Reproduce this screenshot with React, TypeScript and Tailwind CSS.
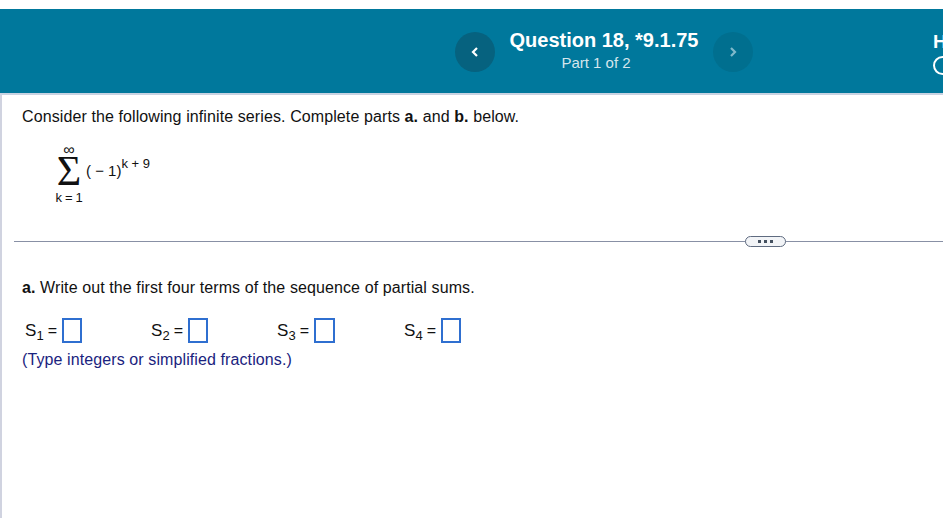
function Term({ n, className, box = "w-[20px]" }: { n: number; className: string; box?: string }) {
  return (
    <span className={`flex items-center ${className}`}>
      <span className="text-[17px] leading-none">S</span>
      <span className="relative top-[5px] text-[13px] leading-none">{n}</span>
      <span className="ml-[4px] mr-[5px] text-[16px] leading-none">=</span>
      <span className={`h-[25px] border-2 border-[#2f6fd0] bg-white ${box}`} />
    </span>
  );
}

export default function App() {
  return (
    <div className="h-[518px] w-[943px] overflow-hidden bg-white pt-[9px] font-['Liberation_Sans',Arial,sans-serif] text-[16px] tracking-[0.1px] text-[#111]">
      {/* question header */}
      <header className="flex h-[84px] bg-[#00789c] tracking-normal text-white">
        <div className="flex w-[455px] flex-none" />
        <div className="flex h-[40px] w-[40px] flex-none translate-y-[23px] items-center justify-center rounded-full bg-[#06627f]">
          <svg width="10" height="12" viewBox="0 0 10 12" fill="none" stroke="#fff" strokeWidth="2.2">
            <path d="M7 2 L3 6 L7 10" />
          </svg>
        </div>
        <div className="flex w-[218px] flex-none flex-col items-center pt-[18px]">
          <div className="whitespace-nowrap text-[20px] font-bold leading-[26px]">Question 18, *9.1.75</div>
          <div className="mr-[16px] text-[15px] leading-[20px] text-[#d5e6ec]">Part 1 of 2</div>
        </div>
        <div className="flex h-[40px] w-[40px] flex-none translate-y-[23px] items-center justify-center rounded-full bg-[#006f8f]">
          <svg width="10" height="12" viewBox="0 0 10 12" fill="none" stroke="#7fb9cb" strokeWidth="2.2">
            <path d="M3 2 L7 6 L3 10" />
          </svg>
        </div>
        <div className="relative flex-1 overflow-hidden">
          <span className="absolute left-[180px] top-[23px] text-[19px] font-bold leading-[20px]">H</span>
          <span className="absolute left-[180px] top-[47px] h-[19px] w-[19px] rounded-full border-[2.5px] border-white" />
        </div>
      </header>

      <main className="h-[425px] border-l-2 border-t-2 border-l-[#d0d3e0] border-t-[#c9d3e2] pl-[20px]">
        <p className="mt-[12px] leading-[20px]">
          Consider the following infinite series. Complete parts <b>a.</b> and <b>b.</b> below.
        </p>

        <div className="mt-[17px] flex h-[64px] items-start pl-[34px] tracking-normal">
          <div className="flex w-[26px] flex-none flex-col items-center">
            <span className="text-[16px] leading-[11px]">∞</span>
            <span className="mt-[2px] font-['Liberation_Serif',serif] text-[42px] leading-[28px]">Σ</span>
            <span className="mt-[6px] whitespace-nowrap text-[13px] leading-[14px] tracking-[-0.3px]">k = 1</span>
          </div>
          <span className="ml-[4px] mt-[18px] whitespace-nowrap text-[15px] leading-[18px]">( − 1)</span>
          <span className="mt-[12px] whitespace-nowrap text-[13px] leading-[16px]">k + 9</span>
        </div>

        <div className="relative -ml-[8px] mt-[33px] h-px bg-[#8890a5]">
          <span className="absolute left-[731px] top-[-5px] flex h-[11px] w-[41px] items-center justify-center gap-[3px] rounded-full border border-[#5f6b80] bg-[#f2f4f7]">
            <span className="h-[3px] w-[3px] bg-[#44505f]" />
            <span className="h-[3px] w-[3px] bg-[#44505f]" />
            <span className="h-[3px] w-[3px] bg-[#44505f]" />
          </span>
        </div>

        <p className="mt-[36px] leading-[20px]">
          <b>a.</b> Write out the first four terms of the sequence of partial sums.
        </p>

        <div className="mt-[20px] flex pl-[3px]">
          <Term n={1} className="w-[126px]" />
          <Term n={2} className="w-[126px]" />
          <Term n={3} className="w-[127px]" box="w-[21px]" />
          <Term n={4} className="w-[60px]" />
        </div>

        <p className="mt-[7px] leading-[20px] text-[#1a237e]">(Type integers or simplified fractions.)</p>
      </main>
    </div>
  );
}
